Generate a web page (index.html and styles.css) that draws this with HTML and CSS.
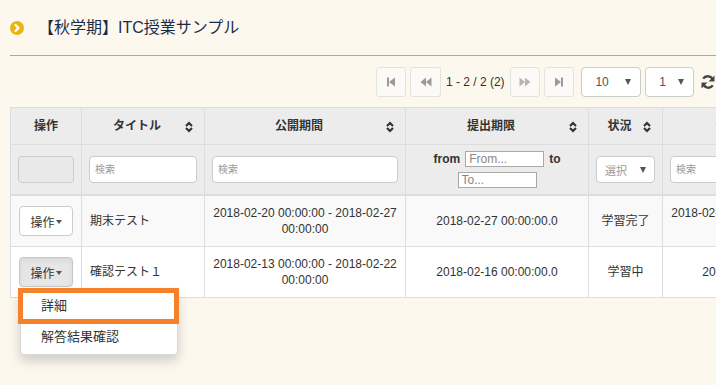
FILE: index.html
```html
<!DOCTYPE html>
<html lang="ja">
<head>
  <meta charset="UTF-8"/>
  <meta name="viewport" content="width=device-width, initial-scale=1.0"/>
  <title>【秋学期】ITC授業サンプル</title>
  <link rel="stylesheet" href="styles.css">
</head>
<body>
  <div class="page">
    <h1 class="title">
      <svg class="title-icon" width="14" height="14" viewBox="0 0 14 14">
        <circle cx="7" cy="7" r="7" fill="#e9b312"/>
        <polyline points="5.5,4 8.5,7 5.5,10" fill="none" stroke="#fff" stroke-width="2.2" stroke-linecap="round" stroke-linejoin="round"/>
      </svg>
      <span>【秋学期】ITC授業サンプル</span>
    </h1>

    <div class="pager">
      <button class="pg-btn" title="最初">
        <svg width="10" height="10" viewBox="0 0 10 10"><rect x="1" y="0.5" width="2" height="9" fill="#9a9a9a"/><polygon points="9,0.5 3,5 9,9.5" fill="#9a9a9a"/></svg>
      </button>
      <button class="pg-btn" title="前へ">
        <svg width="12" height="10" viewBox="0 0 12 10"><polygon points="6,0.5 0.5,5 6,9.5" fill="#9a9a9a"/><polygon points="11.5,0.5 6,5 11.5,9.5" fill="#9a9a9a"/></svg>
      </button>
      <span class="pg-info">1 - 2 / 2 (2)</span>
      <button class="pg-btn" title="次へ">
        <svg width="12" height="10" viewBox="0 0 12 10"><polygon points="0.5,0.5 6,5 0.5,9.5" fill="#b5b5b5"/><polygon points="6,0.5 11.5,5 6,9.5" fill="#b5b5b5"/></svg>
      </button>
      <button class="pg-btn" title="最後">
        <svg width="10" height="10" viewBox="0 0 10 10"><polygon points="1,0.5 7,5 1,9.5" fill="#9a9a9a"/><rect x="7" y="0.5" width="2" height="9" fill="#9a9a9a"/></svg>
      </button>
      <div class="pg-select size"><span>10</span><i class="arrow"></i></div>
      <div class="pg-select num"><span>1</span><i class="arrow"></i></div>
      <svg class="refresh" width="16" height="16" viewBox="0 0 16 16">
        <path d="M13 6.5A5.5 5.5 0 0 0 3.2 4.6" fill="none" stroke="#444" stroke-width="2.4"/>
        <polygon points="14.5,1.5 14.5,7.5 8.5,7.5" fill="#444"/>
        <path d="M3 9.5A5.5 5.5 0 0 0 12.8 11.4" fill="none" stroke="#444" stroke-width="2.4"/>
        <polygon points="1.5,14.5 1.5,8.5 7.5,8.5" fill="#444"/>
      </svg>
    </div>

    <table class="grid">
      <colgroup>
        <col style="width:71px">
        <col style="width:123px">
        <col style="width:201px">
        <col style="width:183px">
        <col style="width:74px">
        <col style="width:201px">
      </colgroup>
      <thead>
        <tr class="head">
          <th class="plain">操作</th>
          <th>タイトル<svg class="sort" width="8" height="12" viewBox="0 0 8 12"><polyline points="1,5 4,2 7,5" /><polyline points="1,7 4,10 7,7" /></svg></th>
          <th>公開期間<svg class="sort" width="8" height="12" viewBox="0 0 8 12"><polyline points="1,5 4,2 7,5" /><polyline points="1,7 4,10 7,7" /></svg></th>
          <th>提出期限<svg class="sort" width="8" height="12" viewBox="0 0 8 12"><polyline points="1,5 4,2 7,5" /><polyline points="1,7 4,10 7,7" /></svg></th>
          <th>状況<svg class="sort" width="8" height="12" viewBox="0 0 8 12"><polyline points="1,5 4,2 7,5" /><polyline points="1,7 4,10 7,7" /></svg></th>
          <th>テスト実施期間<svg class="sort" width="8" height="12" viewBox="0 0 8 12"><polyline points="1,5 4,2 7,5" /><polyline points="1,7 4,10 7,7" /></svg></th>
        </tr>
        <tr class="filters">
          <td><div class="blank-box"></div></td>
          <td><input class="search" type="text" placeholder="検索"/></td>
          <td><input class="search" type="text" placeholder="検索"/></td>
          <td class="range">
            <div><b>from</b> <input class="plain-input" type="text" placeholder="From..."/> <b>to</b></div>
            <div><input class="plain-input" type="text" placeholder="To..."/></div>
          </td>
          <td><div class="choose"><span>選択</span><i class="arrow"></i></div></td>
          <td><input class="search" type="text" placeholder="検索"/></td>
        </tr>
      </thead>
      <tbody>
        <tr class="odd">
          <td class="op"><div class="op-wrap"><button class="op-btn">操作<i class="caret"></i></button></div></td>
          <td class="left">期末テスト</td>
          <td>2018-02-20 00:00:00 - 2018-02-27 00:00:00</td>
          <td>2018-02-27 00:00:00.0</td>
          <td>学習完了</td>
          <td>2018-02-20 00:00:00 - 2018-02-27 00:00:00</td>
        </tr>
        <tr>
          <td class="op">
            <div class="op-wrap">
              <button class="op-btn active">操作<i class="caret"></i></button>
              <ul class="menu">
                <li class="picked">詳細</li>
                <li>解答結果確認</li>
              </ul>
            </div>
          </td>
          <td class="left">確認テスト１</td>
          <td>2018-02-13 00:00:00 - 2018-02-22 00:00:00</td>
          <td>2018-02-16 00:00:00.0</td>
          <td>学習中</td>
          <td>2018-02-16 00:00:00.0</td>
        </tr>
      </tbody>
    </table>
  </div>
</body>
</html>
```

FILE: styles.css
```css
html, body { margin:0; overflow:hidden; }
body { background:#fdf8ee; color:#333; font-family:"Liberation Sans", "Noto Sans CJK JP", sans-serif; font-size:12px; width:716px; height:385px; }
.page { padding-left:10px; }

.title { margin:0; padding:15px 0 14px; border-bottom:1px solid #a8a8a8; display:flex; align-items:center; font-size:16px; font-weight:normal; line-height:26px; color:#1c2b4a; }
.title-icon { margin-right:14px; flex-shrink:0; }

.pager { display:flex; align-items:center; gap:4px; margin:11px 0 0 366px; height:30px; white-space:nowrap; }
.pg-btn { width:33px; height:30px; padding:0; display:flex; align-items:center; justify-content:center; background:#fbfaf7; border:1px solid #e4e2dc; border-radius:3px; }
.pg-info { font-size:12px; color:#333; margin:0 1px; }
.pg-select { height:30px; box-sizing:border-box; background:#fff; border:1px solid #ccc; border-radius:4px; display:flex; align-items:center; justify-content:space-between; padding:0 9px 0 13px; font-size:12px; color:#555; }
.pg-select.size { width:63px; margin-left:3px; }
.pg-select.num { width:51px; }
.arrow { width:0; height:0; border-left:3.5px solid transparent; border-right:3.5px solid transparent; border-top:6px solid #555; }
.refresh { margin-left:2px; flex-shrink:0; }

.grid { margin-top:10px; border-collapse:collapse; table-layout:fixed; width:853px; }
.grid th, .grid td { border:1px solid #ddd; text-align:center; vertical-align:middle; }
.grid th { position:relative; background:#ececec; font-size:12px; font-weight:bold; line-height:16px; padding:10px 20px 10px 8px; color:#333; }
.grid th.plain { padding-right:8px; }
.sort { position:absolute; right:11px; top:13px; fill:none; stroke:#333; stroke-width:2.2; }

.filters td { background:#ececec; padding:0 7px; height:49px; border-bottom:2px solid #ddd; }
.blank-box { height:27px; box-sizing:border-box; background:#e9e9e9; border:1px solid #ccc; border-radius:4px; }
.search { display:block; width:100%; height:27px; box-sizing:border-box; border:1px solid #ccc; border-radius:4px; background:#fff; font-family:inherit; font-size:10px; padding:0 5px; }
.search::placeholder { color:#999; }
.range { font-size:12px; line-height:16px; }
.range div { display:flex; justify-content:center; align-items:center; gap:5px; }
.range div + div { margin-top:5px; }
.plain-input { width:79px; height:16px; box-sizing:border-box; border:1px solid #a9a9a9; border-radius:0; padding:0 3px; font-family:inherit; font-size:12px; background:#fff; }
.plain-input::placeholder { color:#888; }
.choose { height:27px; box-sizing:border-box; background:#fff; border:1px solid #ccc; border-radius:4px; display:flex; align-items:center; justify-content:space-between; padding:0 8px; font-size:11px; color:#999; }

.grid tbody td { padding:9px 8px; line-height:16px; height:32px; background:#fff; color:#333; }
.grid tbody tr.odd td { background:#f9f9f9; }
.grid tbody td.left { text-align:left; }
.grid tbody td.op { padding:0 8px; }

.op-wrap { position:relative; display:inline-block; }
.op-btn { width:54px; height:30px; display:flex; align-items:center; justify-content:center; gap:1px; padding:0; font-family:inherit; font-size:12px; color:#333; background:#fff; border:1px solid #ccc; border-radius:4px; }
.op-btn.active { background:#e6e6e6; border-color:#c6c6c6; box-shadow:inset 0 3px 5px rgba(0,0,0,.06); }
.caret { width:0; height:0; border-left:3.5px solid transparent; border-right:3.5px solid transparent; border-top:4px solid #555; margin-top:1px; }

.menu { position:absolute; top:32px; left:1px; width:158px; box-sizing:border-box; margin:0; padding:0 0 5px; list-style:none; background:#fff; border:1px solid rgba(0,0,0,.15); border-radius:4px; box-shadow:0 6px 12px rgba(0,0,0,.175); text-align:left; z-index:5; }
.menu li { padding:3px 20px; font-size:13px; line-height:18px; color:#333; white-space:nowrap; }
.menu li.picked { border:5px solid #f5822a; margin:-2px -2px 1px -3px; padding:4px 18px; }
```
